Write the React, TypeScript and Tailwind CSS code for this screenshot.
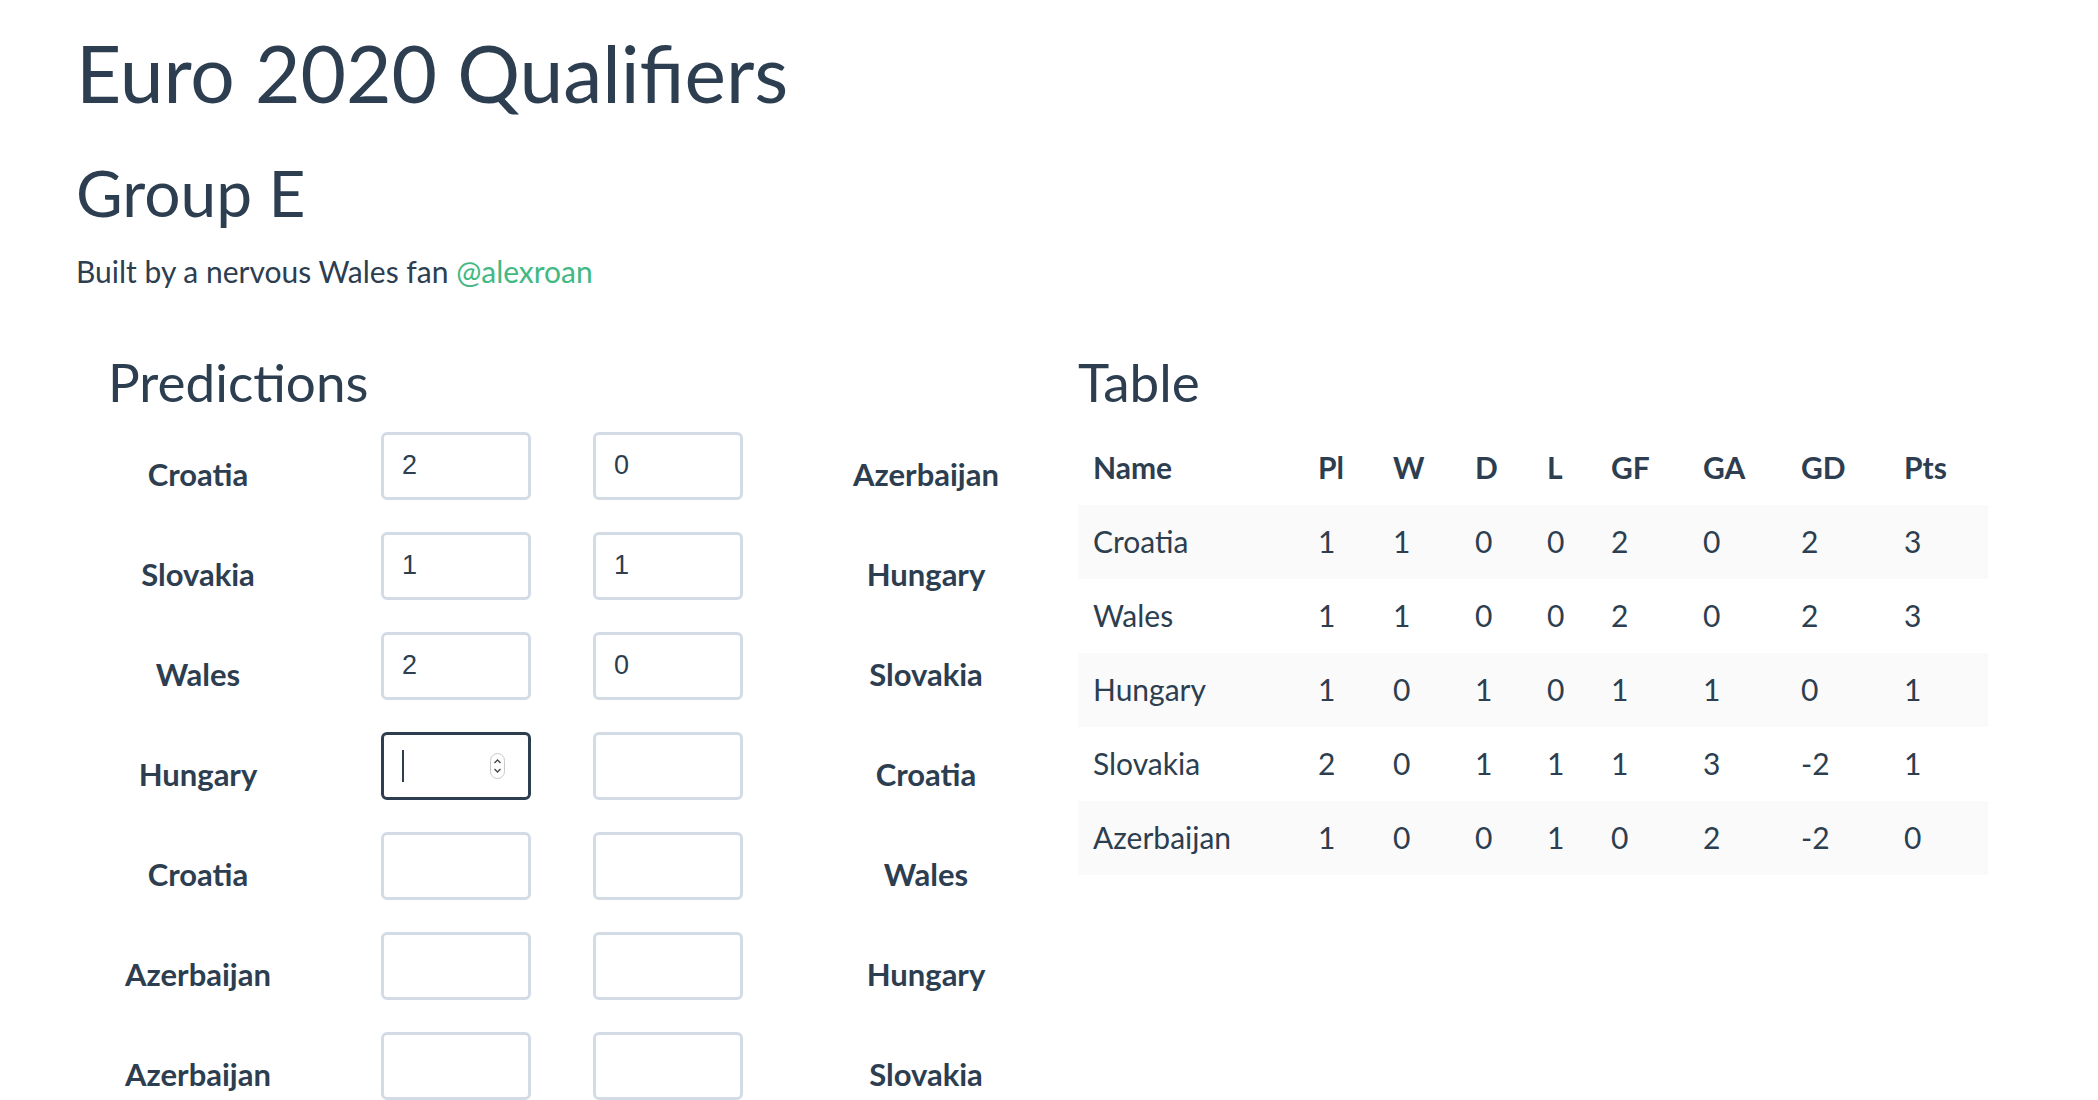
import React from "react";

const predictions: { home: string; away: string; hs: string; as: string; focused?: boolean }[] = [
  { home: "Croatia", away: "Azerbaijan", hs: "2", as: "0" },
  { home: "Slovakia", away: "Hungary", hs: "1", as: "1" },
  { home: "Wales", away: "Slovakia", hs: "2", as: "0" },
  { home: "Hungary", away: "Croatia", hs: "", as: "", focused: true },
  { home: "Croatia", away: "Wales", hs: "", as: "" },
  { home: "Azerbaijan", away: "Hungary", hs: "", as: "" },
  { home: "Azerbaijan", away: "Slovakia", hs: "", as: "" },
];

const table: (string | number)[][] = [
  ["Croatia", 1, 1, 0, 0, 2, 0, 2, 3],
  ["Wales", 1, 1, 0, 0, 2, 0, 2, 3],
  ["Hungary", 1, 0, 1, 0, 1, 1, 0, 1],
  ["Slovakia", 2, 0, 1, 1, 1, 3, -2, 1],
  ["Azerbaijan", 1, 0, 0, 1, 0, 2, -2, 0],
];

const headers = ["Name", "Pl", "W", "D", "L", "GF", "GA", "GD", "Pts"];
const colWidths = [
  "w-[225px]",
  "w-[75px]",
  "w-[82px]",
  "w-[72px]",
  "w-[64px]",
  "w-[92px]",
  "w-[98px]",
  "w-[103px]",
  "w-[99px]",
];

function ScoreBox({ value, focused }: { value: string; focused?: boolean }) {
  return (
    <div className="relative w-[150px] h-[68px]">
      <input
        type="text"
        defaultValue={value}
        className={
          "w-full h-full rounded-[6px] border-[3px] bg-white pl-[18px] text-[27px] text-[#2c3e50] outline-none font-[family-name:Liberation_Sans,Arial,sans-serif] " +
          (focused ? "border-[#2c3e50]" : "border-[#d3dce5]")
        }
      />
      {focused && (
        <>
          <div className="absolute left-[21px] top-[18px] w-[2px] h-[32px] bg-[#2c3e50]" />
          <div className="absolute left-[109px] top-[21px] w-[15px] h-[26px] rounded-full border border-[#c8c8c8] bg-white flex flex-col items-center justify-center">
            <svg width="9" height="18" viewBox="0 0 9 18" fill="none" stroke="#444" strokeWidth="1.3">
              <path d="M1.5 6 L4.5 3 L7.5 6" />
              <path d="M1.5 12 L4.5 15 L7.5 12" />
            </svg>
          </div>
        </>
      )}
    </div>
  );
}

export default function App() {
  return (
    <div className="min-h-screen bg-white text-[#2c3e50] font-[family-name:Lato,sans-serif] pl-[76px] pr-[75px] pt-[26px]">
      <h1 className="text-[78.5px] leading-[1.2] font-normal">Euro 2020 Qualifiers</h1>
      <h2 className="mt-[35px] text-[64px] leading-[1.2] font-normal">Group E</h2>
      <p className="mt-[17px] text-[30px] leading-[1.5]">
        Built by a nervous Wales fan <a className="text-[#42b983]">@alexroan</a>
      </p>

      <div className="mt-[56px] flex">
        <div className="w-[1002px] pl-[32px]">
          <h3 className="text-[53px] leading-[1.2] font-normal">Predictions</h3>
          <div className="mt-[18px] flex flex-col gap-[32px]">
            {predictions.map((p, i) => (
              <div key={i} className="flex items-start">
                <div className="w-[180px] h-[68px] pt-[18px] flex items-center justify-center text-[31px] font-bold">
                  {p.home}
                </div>
                <div className="ml-[93px]">
                  <ScoreBox value={p.hs} focused={p.focused} />
                </div>
                <div className="ml-[62px]">
                  <ScoreBox value={p.as} />
                </div>
                <div className="ml-[60px] w-[246px] h-[68px] pt-[18px] flex items-center justify-center text-[31px] font-bold">
                  {p.away}
                </div>
              </div>
            ))}
          </div>
        </div>

        <div className="w-[910px]">
          <h3 className="text-[53px] leading-[1.2] font-normal">Table</h3>
          <table className="mt-[17px] w-[910px] table-fixed border-collapse text-[30px]">
            <colgroup>
              {colWidths.map((w, i) => (
                <col key={i} className={w} />
              ))}
            </colgroup>
            <thead>
              <tr className="h-[74px]">
                {headers.map((h) => (
                  <th key={h} className="text-left font-bold pl-[15px] align-middle">
                    {h}
                  </th>
                ))}
              </tr>
            </thead>
            <tbody>
              {table.map((row, i) => (
                <tr key={i} className={"h-[74px] " + (i % 2 === 0 ? "bg-[#fafafa]" : "bg-white")}>
                  {row.map((c, j) => (
                    <td key={j} className="text-left pl-[15px] align-middle">
                      {c}
                    </td>
                  ))}
                </tr>
              ))}
            </tbody>
          </table>
        </div>
      </div>
    </div>
  );
}
